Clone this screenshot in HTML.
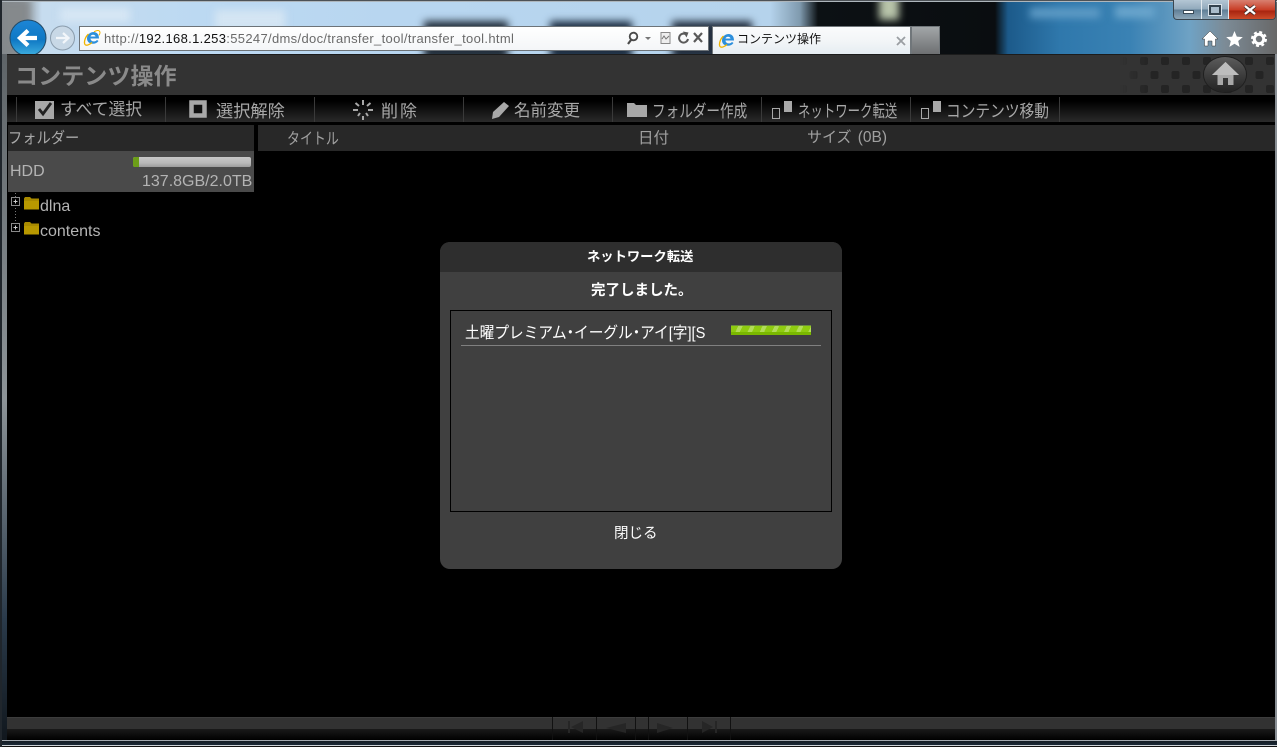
<!DOCTYPE html>
<html lang="ja"><head><meta charset="utf-8"><title>コンテンツ操作</title>
<style>
*{box-sizing:border-box}
html,body{margin:0;padding:0;width:1277px;height:747px;overflow:hidden;background:#000}
body{position:relative;font-family:"Liberation Sans","Noto Sans CJK JP",sans-serif;color:#aaa}
.a{position:absolute}
.t{position:absolute;white-space:nowrap;line-height:1;transform-origin:0 50%}
.sep{position:absolute;top:97px;width:1px;height:25px;background:#3a3a3a}
.blur{position:absolute;filter:blur(4px)}
</style></head><body>

<!-- blurred desktop / aero chrome -->
<div class="a" style="left:0;top:0;width:1277px;height:54px;overflow:hidden;background:linear-gradient(90deg,#7f8589 0,#8f979c 22px,#c6dcef 42px,#bcd9f2 200px,#b8d6f0 400px,#b5d3ec 770px,#7f9aae 800px,#0c1114 818px,#0a0d10 995px,#1c5a8a 1008px,#2f78ac 1060px,#3a82b4 1130px,#6fa2c4 1190px,#7c8b96 1225px,#686868 1277px)">
<div class="blur" style="left:60px;top:8px;width:70px;height:14px;background:#d6e6f4"></div>
<div class="blur" style="left:215px;top:10px;width:70px;height:20px;background:#d4e5f3"></div>
<div class="blur" style="left:424px;top:21px;width:84px;height:40px;background:#24303d"></div>
<div class="blur" style="left:550px;top:21px;width:82px;height:40px;background:#1f3044"></div>
<div class="blur" style="left:672px;top:21px;width:80px;height:40px;background:#243040"></div>
<div class="blur" style="left:879px;top:-6px;width:20px;height:26px;background:#b8c4aa"></div>
<div class="blur" style="left:1030px;top:8px;width:70px;height:10px;background:#5f9cc6"></div>
<div class="blur" style="left:1115px;top:6px;width:40px;height:12px;background:#6aa5cc"></div>
<div class="blur" style="left:0;top:0;width:30px;height:54px;background:#85898c"></div>
</div>
<div class="a" style="left:0;top:0;width:1277px;height:2px;background:linear-gradient(#1c2024,#dfe8ee)"></div>
<div class="a" style="left:0;top:0;width:2px;height:747px;background:#20262c"></div>
<div class="a" style="left:2px;top:54px;width:5px;height:690px;background:linear-gradient(#5e6468,#8d9498 50%,#2a3a4a 82%,#10161c)"></div>
<div class="a" style="left:1275px;top:54px;width:2px;height:690px;background:#8a9096"></div>

<!-- back / forward -->
<svg class="a" style="left:8px;top:18px" width="72" height="38" viewBox="0 0 72 38">
<defs><linearGradient id="bk" x1="0" y1="0" x2="0" y2="1"><stop offset="0" stop-color="#1d86d6"/><stop offset=".55" stop-color="#0f78c4"/><stop offset="1" stop-color="#3fb0e0"/></linearGradient></defs>
<circle cx="20" cy="20" r="18" fill="url(#bk)" stroke="#244a66"/>
<path d="M12 20H29M20 12.500L12 20l8 7.500" fill="none" stroke="#fff" stroke-width="4.200"/>
<circle cx="54.500" cy="20" r="12" fill="#c8d8e6" stroke="#8a9cac"/>
<path d="M48 20H60M55 15l5.500 5-5.500 5" fill="none" stroke="#f2f6fa" stroke-width="2.200"/>
</svg>

<!-- address bar -->
<div class="a" style="left:79px;top:26px;width:630px;height:25px;background:linear-gradient(#fff,#f4f6f8);border:1px solid #6d7378"></div>
<svg class="a" style="left:83px;top:29px" width="18" height="18" viewBox="0 0 18 18"><path d="M4 9.500C4 5 8 3 10.500 3c3.500 0 5.500 2.500 5.500 6.500H7.500c.2 3 4 4 6.500 1.500l1.500 1C12.500 16.500 4 15.500 4 9.500z" fill="#2c8fdc"/><path d="M7.500 7.500h5c-.3-2.400-4.600-2.400-5 0z" fill="#fff"/><path d="M5.500 5C2.500 7.500 .5 13 2 15.500c1.500 1.800 5-.3 7-2" fill="none" stroke="#f0b400" stroke-width="1.300"/><path d="M11 2.800C14 .8 16.800 1 17 3.500c0 1-.3 1.800-1 2.800" fill="none" stroke="#f0b400" stroke-width="1"/></svg>
<div class="t" style="left:104px;top:32px;font-size:13px;color:#6a6a6a;letter-spacing:.33px">http://<span style="color:#111">192.168.1.253</span>:55247/dms/doc/transfer_tool/transfer_tool.html</div>
<svg class="a" style="left:624px;top:29px" width="82" height="18" viewBox="0 0 82 18">
<circle cx="9.500" cy="7.500" r="3.800" fill="none" stroke="#4a4a4a" stroke-width="1.800"/><path d="M7 11l-3 4" stroke="#4a4a4a" stroke-width="2.200"/>
<path d="M21 8h6l-3 3z" fill="#777"/>
<rect x="37" y="3.500" width="9" height="11" fill="#eee" stroke="#888"/><path d="M38 10l2-3 2 3 3-3" fill="none" stroke="#777"/>
<path d="M61.500 5a4.500 4.500 0 1 0 2.500 5" fill="none" stroke="#5a5a5a" stroke-width="2"/><path d="M59 2.500l5.500 1-2 5z" fill="#5a5a5a"/>
<path d="M70 4l8 9M78 4l-8 9" stroke="#5a5a5a" stroke-width="2.200"/>
</svg>

<!-- tab -->
<div class="a" style="left:712px;top:26px;width:199px;height:28px;background:linear-gradient(#fafbfc,#f2f5f7 55%,#e6edf2);border:1px solid #70767a;border-bottom:0"></div>
<svg class="a" style="left:718px;top:31px" width="18" height="18" viewBox="0 0 18 18"><path d="M4 9.500C4 5 8 3 10.500 3c3.500 0 5.500 2.500 5.500 6.500H7.500c.2 3 4 4 6.500 1.500l1.500 1C12.500 16.500 4 15.500 4 9.500z" fill="#2c8fdc"/><path d="M7.500 7.500h5c-.3-2.400-4.600-2.400-5 0z" fill="#fff"/><path d="M5.500 5C2.500 7.500 .5 13 2 15.500c1.500 1.800 5-.3 7-2" fill="none" stroke="#f0b400" stroke-width="1.300"/></svg>
<div class="t" style="left:737px;top:33px;font-size:12px;color:#111">コンテンツ操作</div>
<svg class="a" style="left:895px;top:35px" width="12" height="12" viewBox="0 0 12 12"><path d="M2 2l8 8M10 2l-8 8" stroke="#9a9ea2" stroke-width="1.800"/></svg>
<div class="a" style="left:911px;top:26px;width:29px;height:28px;background:linear-gradient(#a2a6a8,#6e7072);border:1px solid #70767a;border-bottom:0"></div>

<!-- caption buttons -->
<div class="a" style="left:1173px;top:0;width:103px;height:20px;border:1px solid #3a4650;border-top:0;border-radius:0 0 4px 4px;overflow:hidden;background:linear-gradient(#b4c6d4,#92aabc 48%,#5f7e96 52%,#8ea6b8)">
<div class="a" style="left:27px;top:0;width:1px;height:20px;background:#e0e8ee"></div>
<div class="a" style="left:54px;top:0;width:1px;height:20px;background:#e0e8ee"></div>
<div class="a" style="left:55px;top:0;width:48px;height:20px;background:linear-gradient(#d88070,#c83c24 50%,#a82410 55%,#d0502c)"></div>
<div class="a" style="left:9px;top:10px;width:11px;height:4px;background:#fff;border:1px solid #3a4a58"></div>
<div class="a" style="left:35px;top:5px;width:12px;height:10px;border:2px solid #33424e;background:#a9bccb;box-shadow:0 0 0 1px #d8e2ea"></div>
<svg class="a" style="left:68px;top:3px" width="16" height="14" viewBox="0 0 16 14"><path d="M3 3l10 8M13 3L3 11" stroke="#3a2a26" stroke-width="4"/><path d="M3 3l10 8M13 3L3 11" stroke="#fff" stroke-width="2.400"/></svg>
</div>

<!-- command icons -->
<svg class="a" style="left:1200px;top:29px" width="70" height="20" viewBox="0 0 70 20">
<path d="M10 2L2 10h2.500v7h3.500v-5h4v5h3.500v-7H18z" fill="#fff" stroke="#333" stroke-width=".5"/>
<path d="M34.500 2l2.300 5.600 6 .5-4.600 3.900 1.400 5.900-5.100-3.100-5.100 3.100 1.400-5.900L26.200 8.100l6-.5z" fill="#fff"/>
<circle cx="59" cy="10" r="4.700" fill="none" stroke="#fff" stroke-width="3"/><circle cx="59" cy="10" r="7" fill="none" stroke="#fff" stroke-width="2" stroke-dasharray="3 2.500"/>
</svg>

<!-- app header -->
<div class="a" style="left:7px;top:54px;width:1268px;height:41px;background:#333;border-top:1px solid #1c1c1c"></div>
<svg class="a" style="left:1120px;top:55px" width="155" height="40" viewBox="0 0 155 40">
<defs><pattern id="dots" width="21" height="28" patternUnits="userSpaceOnUse"><rect x="20" y="2" width="8" height="8" rx="2" fill="#242424"/><rect x="-1" y="2" width="8" height="8" rx="2" fill="#242424"/><rect x="9.500" y="16" width="8" height="8" rx="2" fill="#242424"/></pattern>
<linearGradient id="fd" x1="0" x2="1" y1="0" y2="0"><stop offset="0" stop-color="#fff" stop-opacity="0"/><stop offset=".2" stop-color="#fff"/></linearGradient><mask id="fm"><rect width="155" height="40" fill="url(#fd)"/></mask></defs>
<rect width="155" height="40" fill="url(#dots)" mask="url(#fm)"/>
</svg>
<div class="t" style="left:15px;top:65px;font-size:23px;font-weight:bold;color:#8a8a8a;letter-spacing:.1px">コンテンツ操作</div>
<div class="a" style="left:1204px;top:57px;width:42px;height:35px;border-radius:50%;background:linear-gradient(#5c5c5c,#3e3e3e 50%,#232323);box-shadow:0 0 0 1px #1f1f1f"></div>
<svg class="a" style="left:1209px;top:60px" width="33" height="27" viewBox="0 0 33 27"><path d="M16.500 2L3 15h5.500v10h5.500v-7h5v7h5.500V15H30z" fill="#a8a8a8"/><path d="M16.500 2L3 15h27z" fill="#bdbdbd"/></svg>

<!-- toolbar -->
<div class="a" style="left:7px;top:95px;width:1268px;height:28px;background:linear-gradient(#000 0,#000 6px,#2c2c2c 100%)"></div>
<div class="a" style="left:7px;top:122px;width:1268px;height:3px;background:#000"></div>
<div class="sep" style="left:16px"></div><div class="sep" style="left:165px"></div><div class="sep" style="left:314px"></div><div class="sep" style="left:463px"></div><div class="sep" style="left:612px"></div><div class="sep" style="left:761px"></div><div class="sep" style="left:910px"></div><div class="sep" style="left:1059px"></div>

<svg class="a" style="left:35px;top:100px" width="20" height="20" viewBox="0 0 20 20"><rect x="0" y="1" width="19" height="18" fill="#a8a8a8"/><path d="M4 9l4 5 8-11" fill="none" stroke="#222" stroke-width="2.800"/></svg>
<div class="t" style="left:60px;top:102px;font-size:16.800px;color:#a8a8a8">すべて選択</div>
<svg class="a" style="left:189px;top:100px" width="19" height="19" viewBox="0 0 19 19"><rect x="2.500" y="2.500" width="13" height="13" fill="#111" stroke="#a8a8a8" stroke-width="4.500"/></svg>
<div class="t" style="left:216px;top:103px;font-size:17.200px;color:#a8a8a8">選択解除</div>
<svg class="a" style="left:352px;top:99px" width="22" height="22" viewBox="0 0 22 22"><path d="M11 1v5M3.500 4l3.500 3M1 11h5M18.500 4L15 7M21 11h-5M6 17l2-3M16 17l-2-3M11 21v-4" stroke="#a8a8a8" stroke-width="2"/></svg>
<div class="t" style="left:381px;top:103px;font-size:17px;color:#a8a8a8;letter-spacing:2px">削除</div>
<svg class="a" style="left:491px;top:100px" width="20" height="20" viewBox="0 0 20 20"><path d="M13 2l5 4L8 17l-7 2 1-7z" fill="#a8a8a8"/></svg>
<div class="t" style="left:514px;top:103px;font-size:16.500px;color:#a8a8a8">名前変更</div>
<svg class="a" style="left:626px;top:101px" width="22" height="17" viewBox="0 0 22 17"><path d="M1 2h7l2 2h11v12H1z" fill="#a8a8a8"/></svg>
<div class="t" style="left:652px;top:103px;font-size:17px;color:#a8a8a8;transform:scaleX(.8)">フォルダー作成</div>
<svg class="a" style="left:771px;top:100px" width="24" height="20" viewBox="0 0 24 20"><rect x="1.500" y="8.500" width="7" height="10" fill="none" stroke="#a8a8a8"/><rect x="13" y="1" width="8" height="11" fill="#a8a8a8"/></svg>
<div class="t" style="left:798px;top:103px;font-size:17px;color:#a8a8a8;transform:scaleX(.73)">ネットワーク転送</div>
<svg class="a" style="left:920px;top:100px" width="24" height="20" viewBox="0 0 24 20"><rect x="1.500" y="8.500" width="7" height="10" fill="none" stroke="#a8a8a8"/><rect x="13" y="1" width="8" height="11" fill="#a8a8a8"/></svg>
<div class="t" style="left:946px;top:103px;font-size:17px;color:#a8a8a8;transform:scaleX(.865)">コンテンツ移動</div>

<!-- column headers -->
<div class="a" style="left:8px;top:125px;width:246px;height:26px;background:#282828"></div>
<div class="t" style="left:8px;top:131px;font-size:15.500px;color:#a8a8a8;transform:scaleX(.92)">フォルダー</div>
<div class="a" style="left:258px;top:125px;width:1017px;height:26px;background:#282828"></div>
<div class="t" style="left:287px;top:132px;font-size:16px;color:#a0a0a0;transform:scaleX(.81)">タイトル</div>
<div class="t" style="left:638px;top:131px;font-size:15.500px;color:#a0a0a0">日付</div>
<div class="t" style="left:807px;top:130px;font-size:15px;color:#a0a0a0">サイズ <span style="font-size:15.500px;margin-left:2px">(0B)</span></div>

<!-- HDD -->
<div class="a" style="left:8px;top:151px;width:246px;height:41px;background:#4a4a4a"></div>
<div class="t" style="left:10px;top:164px;font-size:16px;color:#b4b4b4">HDD</div>
<div class="a" style="left:133px;top:157px;width:118px;height:10px;background:linear-gradient(#c8c8c8,#b8b8b8 60%,#9c9c9c);border-radius:2px;overflow:hidden"><div style="width:6px;height:10px;background:#6c9e18"></div></div>
<div class="t" style="left:142px;top:174px;font-size:16px;color:#b4b4b4">137.8GB/2.0TB</div>

<!-- tree -->
<svg class="a" style="left:10px;top:192px" width="32" height="50" viewBox="0 0 32 50">
<path d="M5.500 1v30" stroke="#777" stroke-dasharray="1 2"/>
<rect x="1.500" y="5.500" width="8" height="8" fill="#000" stroke="#8a8a8a"/><path d="M3.500 9.500h4M5.500 7.500v4" stroke="#ccc"/>
<rect x="1.500" y="31.500" width="8" height="8" fill="#000" stroke="#8a8a8a"/><path d="M3.500 35.500h4M5.500 33.500v4" stroke="#ccc"/>
<path d="M14 6.500l1-1.500h5l1.500 1.500H29v11H14z" fill="#a88a00"/><path d="M14 9h15v8.500H14z" fill="#b89800"/>
<path d="M14 31.500l1-1.500h5l1.500 1.500H29v11H14z" fill="#a88a00"/><path d="M14 34h15v8.500H14z" fill="#b89800"/>
</svg>
<div class="t" style="left:40px;top:199px;font-size:16px;color:#b4b4b4">dlna</div>
<div class="t" style="left:40px;top:224px;font-size:16px;color:#b4b4b4">contents</div>

<!-- dialog -->
<div class="a" style="left:440px;top:242px;width:402px;height:327px;background:#404040;border-radius:10px;overflow:hidden">
<div style="height:30px;background:#2e2e2e"></div>
</div>
<div class="t" style="left:587px;top:250px;font-size:13.300px;font-weight:bold;color:#fff">ネットワーク転送</div>
<div class="t" style="left:591px;top:284px;font-size:14.500px;font-weight:bold;color:#fff">完了しました。</div>
<div class="a" style="left:450px;top:310px;width:382px;height:202px;border:1px solid #000"></div>
<div class="a" style="left:465px;top:323px;width:240px;height:20px;overflow:hidden">
<div class="t" style="left:0;top:3px;font-size:16px;color:#fff;transform-origin:0 0;transform:scaleX(.917)">土曜プレミアム<span style="letter-spacing:-8px;margin-left:-4px">・</span><span style="margin-left:4px">イーグル</span><span style="letter-spacing:-8px;margin-left:-4px">・</span><span style="margin-left:4px">アイ</span>[字][S]</div>
</div>
<div class="a" style="left:731px;top:325px;width:80px;height:10px;background:repeating-linear-gradient(115deg,#8fcc10 0,#8fcc10 7px,#b2dc5a 7px,#b2dc5a 11px);box-shadow:inset 0 -3px 0 #7ab800,inset 0 1px 0 #6a8a40"></div>
<div class="a" style="left:461px;top:345px;width:360px;height:1px;background:#808080"></div>
<div class="t" style="left:614px;top:527px;font-size:14.500px;color:#fff">閉じる</div>

<!-- bottom bar -->
<div class="a" style="left:7px;top:717px;width:1268px;height:12px;background:#323232;border-top:1px solid #3c3c3c"></div>
<div class="a" style="left:7px;top:729px;width:1268px;height:11px;background:linear-gradient(#1a1a1a,#000)"></div>
<div class="a" style="left:552px;top:717px;width:1px;height:23px;background:#111"></div>
<div class="a" style="left:596px;top:717px;width:1px;height:23px;background:#111"></div>
<div class="a" style="left:635px;top:717px;width:1px;height:23px;background:#111"></div>
<div class="a" style="left:648px;top:717px;width:1px;height:23px;background:#111"></div>
<div class="a" style="left:687px;top:717px;width:1px;height:23px;background:#111"></div>
<div class="a" style="left:730px;top:717px;width:1px;height:23px;background:#111"></div>
<svg class="a" style="left:560px;top:717px" width="165" height="20" viewBox="0 0 165 20"><g fill="#262626"><rect x="8" y="4" width="2" height="12"/><path d="M23 4v12L11 10zM66 6v10L46 11zM97 6v10l16-5zM142 4v12l11-6z"/><rect x="155" y="4" width="2" height="12"/></g></svg>

<!-- bottom frame -->
<div class="a" style="left:2px;top:740px;width:1275px;height:7px;background:linear-gradient(#a4aab0 0,#a4aab0 1px,#141c24 1px,#1c2a36 5px,#cfd4d8 5px,#cfd4d8 6px,#111 6px)"></div>
</body></html>
